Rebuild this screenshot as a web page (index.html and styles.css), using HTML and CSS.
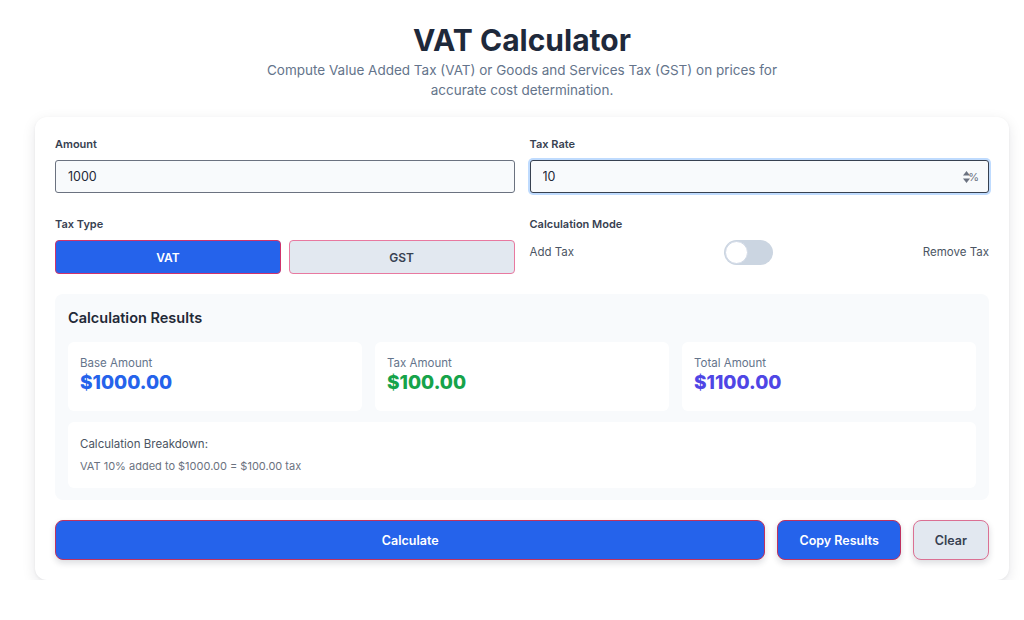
FILE: index.html
```html
<!DOCTYPE html>
<html lang="en">
<head>
<meta charset="utf-8">
<title>VAT Calculator</title>
<link rel="stylesheet" href="styles.css">
</head>
<body>
<div class="page">
  <header class="header">
    <h1 class="title">VAT Calculator</h1>
    <p class="subtitle">Compute Value Added Tax (VAT) or Goods and Services Tax (GST) on prices for accurate cost determination.</p>
  </header>
  <main class="card">
    <div class="grid">
      <div class="field">
        <label class="label">Amount</label>
        <div class="input-wrap">
          <input class="input" type="text" value="1000">
        </div>
      </div>
      <div class="field">
        <label class="label">Tax Rate</label>
        <div class="input-wrap focused">
          <input class="input input-focus" type="text" value="10">
          <span class="suffix">
            <svg class="spin" width="9" height="14" viewBox="0 0 9 14"><path d="M4.5 1 L8 5.5 H1 Z" fill="#6b7280"/><path d="M4.5 13 L8 8.5 H1 Z" fill="#6b7280"/></svg>
            <span class="pct">%</span>
          </span>
        </div>
      </div>
      <div class="field">
        <label class="label">Tax Type</label>
        <div class="seg">
          <button class="seg-btn active">VAT</button>
          <button class="seg-btn">GST</button>
        </div>
      </div>
      <div class="field">
        <label class="label">Calculation Mode</label>
        <div class="mode">
          <span class="mode-text">Add Tax</span>
          <span class="toggle"><span class="knob"></span></span>
          <span class="mode-text">Remove Tax</span>
        </div>
      </div>
    </div>

    <section class="results">
      <h2 class="results-title">Calculation Results</h2>
      <div class="stats">
        <div class="stat">
          <div class="stat-label">Base Amount</div>
          <div class="stat-value blue">$1000.00</div>
        </div>
        <div class="stat">
          <div class="stat-label">Tax Amount</div>
          <div class="stat-value green">$100.00</div>
        </div>
        <div class="stat">
          <div class="stat-label">Total Amount</div>
          <div class="stat-value indigo">$1100.00</div>
        </div>
      </div>
      <div class="breakdown">
        <div class="breakdown-title">Calculation Breakdown:</div>
        <div class="breakdown-text">VAT 10% added to $1000.00 = $100.00 tax</div>
      </div>
    </section>

    <div class="actions">
      <button class="btn btn-primary btn-grow">Calculate</button>
      <button class="btn btn-primary">Copy Results</button>
      <button class="btn btn-secondary">Clear</button>
    </div>
  </main>
</div>
</body>
</html>
```

FILE: styles.css
```css
* { box-sizing: border-box; }
html, body { margin: 0; padding: 0; background: #ffffff; }
body {
  font-family: Inter, "Noto Sans", "Liberation Sans", sans-serif;
  color: #1f2937;
}
.page {
  padding: 0 15px 0 35px;
}
.header {
  text-align: center;
  padding-top: 22px;
}
.title {
  margin: 0;
  font-size: 30px;
  line-height: 36px;
  font-weight: 700;
  color: #1e293b;
  letter-spacing: 0;
}
.subtitle {
  margin: 3px auto 0;
  max-width: 540px;
  font-size: 13.5px;
  line-height: 19.5px;
  color: #64748b;
}
.card {
  margin-top: 17px;
  background: #ffffff;
  border-radius: 12px;
  box-shadow: 0 4px 14px rgba(15, 23, 42, 0.10), 0 1px 3px rgba(15, 23, 42, 0.05);
  padding: 20px 20px 20px 20px;
}
.grid {
  display: grid;
  grid-template-columns: 1fr 1fr;
  column-gap: 15px;
  row-gap: 24px;
}
.field { display: flex; flex-direction: column; }
.label {
  font-size: 11px;
  font-weight: 600;
  color: #374151;
  line-height: 14px;
  margin-bottom: 9px;
}
.input-wrap { position: relative; }
.input {
  width: 100%;
  height: 33px;
  border: 1px solid #6b7280;
  border-radius: 3px;
  background: #f8fafc;
  padding: 0 12px;
  font-family: inherit;
  font-size: 12.5px;
  color: #1f2937;
  outline: none;
}
.input-focus {
  border-color: #374151;
  box-shadow: 0 0 0 2px #bfdbfe;
}
.suffix {
  position: absolute;
  right: 10px;
  top: 50%;
  transform: translateY(-50%);
  display: flex;
  align-items: center;
}
.spin { display: block; }
.pct {
  font-size: 11px;
  color: #6b7280;
  margin-left: -3px;
}
.seg {
  display: grid;
  grid-template-columns: 1fr 1fr;
  gap: 8px;
}
.seg-btn {
  height: 34px;
  border-radius: 4px;
  border: 1px solid #e879a0;
  background: #e2e8f0;
  color: #374151;
  font-family: inherit;
  font-size: 12px;
  font-weight: 600;
}
.seg-btn.active {
  background: #2563eb;
  color: #ffffff;
  border-color: #d0336b;
}
.mode {
  display: flex;
  align-items: center;
  justify-content: space-between;
  height: 34px;
  margin-top: -5px;
}
.mode-text {
  font-size: 11.5px;
  color: #4b5563;
}
.toggle {
  position: relative;
  width: 49px;
  height: 25px;
  border-radius: 13px;
  background: #cbd5e1;
}
.knob {
  position: absolute;
  left: 1px;
  top: 1px;
  width: 23px;
  height: 23px;
  border-radius: 50%;
  background: #ffffff;
  border: 1px solid #d1d9e6;
}
.results {
  margin-top: 20px;
  background: #f8fafc;
  border-radius: 8px;
  padding: 14px 13px 12px 13px;
}
.results-title {
  margin: 0 0 14px 0;
  font-size: 14.5px;
  line-height: 20px;
  font-weight: 600;
  color: #1f2937;
}
.stats {
  display: grid;
  grid-template-columns: 1fr 1fr 1fr;
  gap: 13px;
}
.stat {
  background: #ffffff;
  border-radius: 6px;
  padding: 14px 12px 14px 12px;
  height: 69px;
}
.stat-label {
  font-size: 11.5px;
  color: #64748b;
  line-height: 14px;
}
.stat-value {
  font-size: 19px;
  font-weight: 800;
  line-height: 24px;
  margin-top: 1px;
}
.blue { color: #2563eb; }
.green { color: #16a34a; }
.indigo { color: #4f46e5; }
.breakdown {
  margin-top: 11px;
  background: #ffffff;
  border-radius: 6px;
  padding: 14px 12px 14px 12px;
  height: 66px;
}
.breakdown-title {
  font-size: 11.5px;
  color: #4b5563;
  line-height: 16px;
}
.breakdown-text {
  margin-top: 7px;
  font-size: 11px;
  color: #6b7280;
  line-height: 14px;
}
.actions {
  display: flex;
  gap: 12px;
  margin-top: 20px;
}
.btn {
  height: 40px;
  border-radius: 8px;
  font-family: inherit;
  font-size: 12.5px;
  font-weight: 600;
  padding: 0 21px;
  box-shadow: 0 3px 6px rgba(15, 23, 42, 0.15);
}
.btn-grow { flex: 1; }
.btn-primary {
  background: #2563eb;
  color: #ffffff;
  border: 1px solid #c0325f;
}
.btn-secondary {
  background: #e2e8f0;
  color: #374151;
  border: 1px solid #db7093;
}
```
